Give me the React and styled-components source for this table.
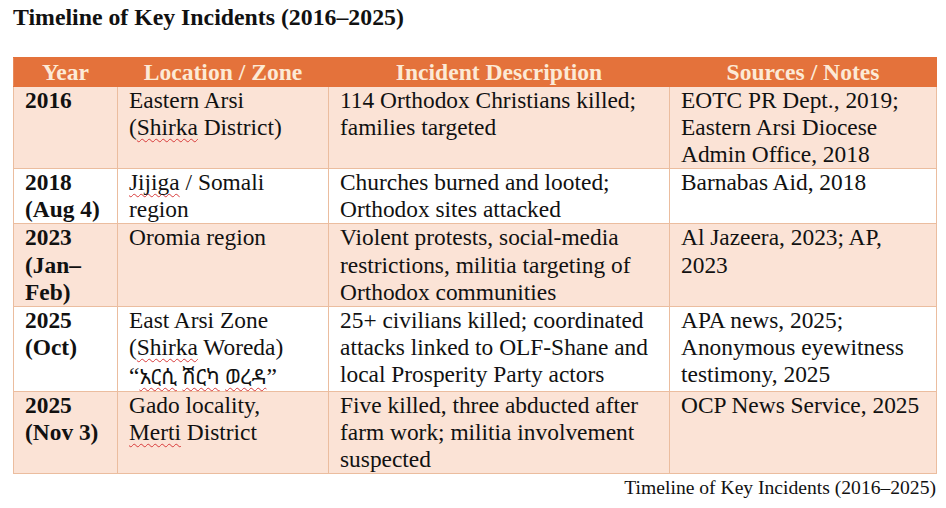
import React from "react";
import styled, { createGlobalStyle } from "styled-components";

const Global = createGlobalStyle`
  html, body { margin: 0; padding: 0; background: #ffffff; }
  body { font-family: "Liberation Serif", "Times New Roman", serif; color: #111; }
`;

const Page = styled.div`
  width: 946px;
  height: 508px;
  box-sizing: border-box;
  padding: 4px 10px 0 13px;
  display: flex;
  flex-direction: column;
`;

const Title = styled.h1`
  margin: 0;
  font-size: 23.8px;
  line-height: 27px;
  font-weight: bold;
  color: #111;
`;

const Table = styled.table`
  margin-top: 26px;
  width: 923px;
  border-collapse: collapse;
  table-layout: fixed;
`;

const HeadCell = styled.th`
  background: #e4723b;
  color: #fcead6;
  font-size: 23.6px;
  font-weight: bold;
  line-height: 28px;
  padding: 0 4px;
  text-align: center;
  border: 1px solid #e4723b;
  border-left-color: #e88a5a;
`;

const Row = styled.tr`
  background: ${(p) => (p.$shaded ? "#fbe3d6" : "#ffffff")};
`;

const Cell = styled.td`
  vertical-align: top;
  font-size: 23.4px;
  line-height: 27.1px;
  padding: 0 4px 0 11px;
  border: 1px solid #ebbd9f;
  font-weight: ${(p) => (p.$bold ? "bold" : "normal")};
  color: #111;
`;

const Spell = styled.span`
  text-decoration: underline wavy #d83a3a;
  text-decoration-thickness: 1px;
  text-underline-offset: 3px;
  text-decoration-skip-ink: none;
`;

const Ethiopic = styled.span`
  font-family: "Noto Sans Ethiopic", "Abyssinica SIL", "DejaVu Sans", "Noto Sans", serif;
  font-size: 21px;
  line-height: 30px;
`;

const Caption = styled.div`
  align-self: flex-end;
  margin-top: 1px;
  font-size: 19.6px;
  line-height: 26px;
  color: #111;
`;

const headers = ["Year", "Location / Zone", "Incident Description", "Sources / Notes"];
const widths = [104, 211, 341, 267];

export default function App() {
  return (
    <>
      <Global />
      <Page>
        <Title>Timeline of Key Incidents (2016–2025)</Title>
        <Table>
          <colgroup>
            {widths.map((w, i) => (
              <col key={i} style={{ width: w }} />
            ))}
          </colgroup>
          <thead>
            <tr>
              {headers.map((h) => (
                <HeadCell key={h}>{h}</HeadCell>
              ))}
            </tr>
          </thead>
          <tbody>
            <Row $shaded>
              <Cell $bold>2016</Cell>
              <Cell>
                Eastern Arsi
                <br />(<Spell>Shirka</Spell> District)
              </Cell>
              <Cell>
                114 Orthodox Christians killed;
                <br />
                families targeted
              </Cell>
              <Cell>
                EOTC PR Dept., 2019;
                <br />
                Eastern Arsi Diocese
                <br />
                Admin Office, 2018
              </Cell>
            </Row>
            <Row>
              <Cell $bold>
                2018
                <br />
                (Aug 4)
              </Cell>
              <Cell>
                <Spell>Jijiga</Spell> / Somali
                <br />
                region
              </Cell>
              <Cell>
                Churches burned and looted;
                <br />
                Orthodox sites attacked
              </Cell>
              <Cell>Barnabas Aid, 2018</Cell>
            </Row>
            <Row $shaded>
              <Cell $bold>
                2023
                <br />
                (Jan–
                <br />
                Feb)
              </Cell>
              <Cell>Oromia region</Cell>
              <Cell>
                Violent protests, social-media
                <br />
                restrictions, militia targeting of
                <br />
                Orthodox communities
              </Cell>
              <Cell>
                Al Jazeera, 2023; AP,
                <br />
                2023
              </Cell>
            </Row>
            <Row>
              <Cell $bold>
                2025
                <br />
                (Oct)
              </Cell>
              <Cell>
                East Arsi Zone
                <br />(<Spell>Shirka</Spell> Woreda)
                <br />“<Ethiopic>
                  <Spell>አርሲ</Spell> <Spell>ሽርካ</Spell> <Spell>ወረዳ</Spell>
                </Ethiopic>”
              </Cell>
              <Cell>
                25+ civilians killed; coordinated
                <br />
                attacks linked to OLF-Shane and
                <br />
                local Prosperity Party actors
              </Cell>
              <Cell>
                APA news, 2025;
                <br />
                Anonymous eyewitness
                <br />
                testimony, 2025
              </Cell>
            </Row>
            <Row $shaded>
              <Cell $bold>
                2025
                <br />
                (Nov 3)
              </Cell>
              <Cell>
                Gado locality,
                <br />
                <Spell>Merti</Spell> District
              </Cell>
              <Cell>
                Five killed, three abducted after
                <br />
                farm work; militia involvement
                <br />
                suspected
              </Cell>
              <Cell>OCP News Service, 2025</Cell>
            </Row>
          </tbody>
        </Table>
        <Caption>Timeline of Key Incidents (2016–2025)</Caption>
      </Page>
    </>
  );
}
